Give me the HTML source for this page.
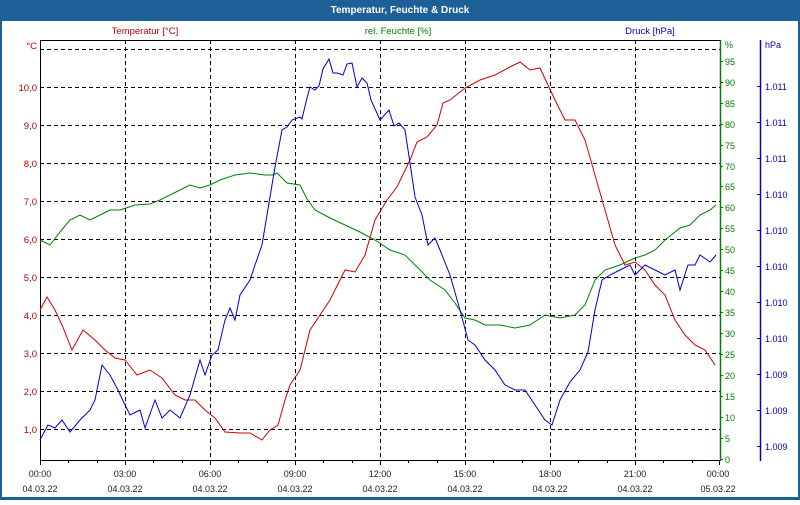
<!DOCTYPE html>
<html><head><meta charset="utf-8"><style>
html,body{margin:0;padding:0;background:#fff}
body{width:800px;height:500px;overflow:hidden;font-family:"Liberation Sans",sans-serif}
</style></head><body>
<svg width="800" height="500" xmlns="http://www.w3.org/2000/svg" font-family="Liberation Sans, sans-serif" font-size="9.5">
<rect x="0" y="0" width="800" height="500" fill="#1d5f97"/>
<rect x="2" y="21" width="796" height="476" fill="#fff"/>
<text x="400" y="13" text-anchor="middle" fill="#fff" font-weight="bold" font-size="10">Temperatur, Feuchte &amp; Druck</text>
<text x="145" y="34" text-anchor="middle" fill="#c00000">Temperatur [°C]</text>
<text x="398" y="34" text-anchor="middle" fill="#008000">rel. Feuchte [%]</text>
<text x="650" y="34" text-anchor="middle" fill="#0000c0">Druck [hPa]</text>
<g stroke="#000" stroke-dasharray="4,3" stroke-width="1">
<path d="M40 49.5H720M40 87.5H720M40 125.5H720M40 163.5H720M40 201.5H720M40 239.5H720M40 277.5H720M40 315.5H720M40 353.5H720M40 391.5H720M40 429.5H720"/>
<path d="M125.5 40V460M210.5 40V460M295.5 40V460M380.5 40V460M465.5 40V460M550.5 40V460M635.5 40V460"/>
</g>
<path d="M40.5 460V40.5H720" stroke="#000" fill="none"/>
<path d="M40 460.5H720" stroke="#000"/>
<g stroke="#000"><path d="M40.5 460v5M68.5 460v3M97.5 460v3M125.5 460v5M153.5 460v3M182.5 460v3M210.5 460v5M238.5 460v3M267.5 460v3M295.5 460v5M323.5 460v3M352.5 460v3M380.5 460v5M408.5 460v3M437.5 460v3M465.5 460v5M493.5 460v3M522.5 460v3M550.5 460v5M578.5 460v3M607.5 460v3M635.5 460v5M663.5 460v3M692.5 460v3M719.5 460v5"/></g>
<path d="M720.5 40V461" stroke="#008000" stroke-width="1.5"/>
<path d="M760.5 40V461" stroke="#0000c0" stroke-width="1.5"/>
<g fill="#c00000" text-anchor="end">
<text x="37" y="49">°C</text><text x="37" y="91">10,0</text><text x="37" y="129">9,0</text><text x="37" y="167">8,0</text><text x="37" y="205">7,0</text><text x="37" y="243">6,0</text><text x="37" y="281">5,0</text><text x="37" y="319">4,0</text><text x="37" y="357">3,0</text><text x="37" y="395">2,0</text><text x="37" y="433">1,0</text>
</g>
<g fill="#008000" font-size="9">
<text x="725" y="48">%</text>
<text x="725" y="65">95</text><text x="725" y="86">90</text><text x="725" y="107">85</text><text x="725" y="128">80</text><text x="725" y="149">75</text><text x="725" y="170">70</text><text x="725" y="190">65</text><text x="725" y="211">60</text><text x="725" y="232">55</text><text x="725" y="253">50</text><text x="725" y="274">45</text><text x="725" y="295">40</text><text x="725" y="316">35</text><text x="725" y="337">30</text><text x="725" y="358">25</text><text x="725" y="379">20</text><text x="725" y="400">15</text><text x="725" y="421">10</text><text x="725" y="442">5</text><text x="725" y="463">0</text>
</g>
<g stroke="#008000"><path d="M720 61.5h3M720 82.5h3M720 103.5h3M720 124.5h3M720 145.5h3M720 166.5h3M720 186.5h3M720 207.5h3M720 228.5h3M720 249.5h3M720 270.5h3M720 291.5h3M720 312.5h3M720 333.5h3M720 354.5h3M720 375.5h3M720 396.5h3M720 417.5h3M720 438.5h3M720 459.5h3"/></g>
<g fill="#0000c0" font-size="9">
<text x="765" y="48">hPa</text>
<text x="765" y="90">1.011</text><text x="765" y="126">1.011</text><text x="765" y="162">1.011</text><text x="765" y="198">1.010</text><text x="765" y="234">1.010</text><text x="765" y="270">1.010</text><text x="765" y="306">1.010</text><text x="765" y="342">1.010</text><text x="765" y="378">1.009</text><text x="765" y="414">1.009</text><text x="765" y="450">1.009</text>
</g>
<g stroke="#0000c0"><path d="M757 86.5h3M757 122.5h3M757 158.5h3M757 194.5h3M757 230.5h3M757 266.5h3M757 302.5h3M757 338.5h3M757 374.5h3M757 410.5h3M757 446.5h3"/></g>
<g fill="#222" text-anchor="middle" font-size="9">
<text x="40" y="477">00:00</text><text x="125" y="477">03:00</text><text x="210" y="477">06:00</text><text x="295" y="477">09:00</text><text x="380" y="477">12:00</text><text x="465" y="477">15:00</text><text x="550" y="477">18:00</text><text x="635" y="477">21:00</text><text x="718" y="477">00:00</text>
<text x="40" y="492">04.03.22</text><text x="125" y="492">04.03.22</text><text x="210" y="492">04.03.22</text><text x="295" y="492">04.03.22</text><text x="380" y="492">04.03.22</text><text x="465" y="492">04.03.22</text><text x="550" y="492">04.03.22</text><text x="635" y="492">04.03.22</text><text x="718" y="492">05.03.22</text>
</g>
<g fill="none" stroke-width="1">
<polyline stroke="#008000" points="40,240 50,245 60,232 70,220 80,215 90,220 100,215 110,210 120,210 135,205 150,204 160,200 170,195 180,190 190,185 200,188 210,185 220,180 235,175 250,173 265,175 273,175 277,173 287,183 300,185 307,199 315,210 330,218 345,225 360,232 375,240 390,250 405,255 415,265 430,280 445,290 455,303 465,318 475,320 485,325 500,325 515,328 530,325 545,315 560,318 575,315 585,305 595,280 605,270 620,265 635,258 645,255 655,250 665,240 680,228 690,225 700,215 710,210 716,205"/>
<polyline stroke="#d00000" points="40,310 47,297 55,310 62,325 72,350 83,330 95,340 105,350 115,358 125,360 137,375 150,370 162,378 175,395 185,400 195,400 205,410 215,418 225,432 240,433 250,433 262,440 270,430 278,425 285,400 290,385 300,370 310,330 320,315 330,300 345,270 355,272 365,255 375,220 387,200 397,187 410,160 417,142 427,137 437,125 443,103 450,100 465,88 480,80 495,75 510,67 520,62 530,70 540,68 555,100 565,120 575,120 585,140 595,175 605,210 615,245 625,265 635,262 645,270 655,285 665,295 675,320 685,335 695,345 705,350 715,365"/>
<polyline stroke="#0000d0" points="40,440 48,425 55,428 62,420 70,432 80,420 90,410 95,400 102,365 110,375 118,390 125,405 130,415 140,410 145,428 155,400 162,418 170,410 180,418 190,395 200,360 205,375 212,355 218,350 225,320 230,308 235,320 240,295 250,280 255,265 262,245 270,197 275,167 282,130 287,127 292,120 300,117 302,119 306,102 310,87 315,90 319,86 323,69 329,59 333,73 337,73 343,75 347,64 352,63 357,87 362,78 367,83 371,100 380,120 389,110 394,126 399,123 405,130 410,163 415,197 422,215 428,245 435,238 440,250 450,275 460,310 468,340 475,345 485,360 495,370 505,385 515,390 525,390 535,405 545,420 552,425 560,400 570,382 580,370 588,352 595,310 602,280 610,275 620,270 630,265 635,275 645,265 655,270 665,275 675,270 680,290 688,265 695,265 700,255 710,262 716,255"/>
</g>
</svg>
</body></html>
